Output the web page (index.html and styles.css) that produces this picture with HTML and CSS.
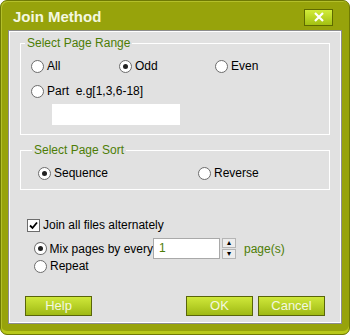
FILE: index.html
```html
<html>
	<head>
		<link rel="stylesheet" href="styles.css">
	</head>
	<body>
	<div class="window">
		<div class="titleBar">
			<span class="title">Join Method</span>
			<span class="closeBtn">
				<svg width="12" height="10" viewBox="0 0 12 10"><path d="M2 1 L10 9 M10 1 L2 9" stroke="#fff" stroke-width="2.2"/></svg>
			</span>
		</div>
		<div class="panel">
			<fieldset class="group rangeGroup">
				<legend>Select Page Range</legend>
				<div class="row">
					<label class="opt optAll"><span class="radio"></span>All</label>
					<label class="opt optOdd"><span class="radio on"></span>Odd</label>
					<label class="opt"><span class="radio"></span>Even</label>
				</div>
				<div class="row partRow">
					<label class="opt"><span class="radio"></span>Part&nbsp; e.g[1,3,6-18]</label>
				</div>
				<div class="partInput"></div>
			</fieldset>

			<fieldset class="group sortGroup">
				<legend>Select Page Sort</legend>
				<div class="row">
					<label class="opt optSeq"><span class="radio on"></span>Sequence</label>
					<label class="opt"><span class="radio"></span>Reverse</label>
				</div>
			</fieldset>

			<div class="joinBlock">
				<label class="opt"><span class="check">
					<svg width="9" height="9" viewBox="0 0 9 9"><path d="M1 4.5 L3.5 7 L8 1.5" stroke="#000" stroke-width="1.8" fill="none"/></svg>
				</span>Join all files alternately</label>
				<div class="mixRow">
					<label class="opt optMix"><span class="radio on"></span>Mix pages by every</label>
					<div class="numInput">1</div>
					<div class="spin">
						<span class="spinBtn">&#9652;</span>
						<span class="spinBtn">&#9662;</span>
					</div>
					<span class="pageLabel">page(s)</span>
				</div>
				<label class="opt repeatOpt"><span class="radio"></span>Repeat</label>
			</div>

			<div class="buttons">
				<span class="btn">Help</span>
				<span class="spacer"></span>
				<span class="btn">OK</span>
				<span class="btn">Cancel</span>
			</div>
		</div>
	</div>
	</body>
</html>
```

FILE: styles.css
```css
body {
	margin: 0;
	font-family: "Liberation Sans", Arial, sans-serif;
	font-size: 12px;
	background: #ffffff;
}

.window {
	width: 350px;
	height: 335px;
	box-sizing: border-box;
	background: #97a30b;
	border: 1px solid #6f7a04;
	border-radius: 7px;
	box-shadow: inset 0 -3px 0 #b8c81a, inset 1px 1px 0 #b3bf2a;
}

.titleBar {
	height: 29px;
	display: flex;
	align-items: center;
	padding: 0 16px 0 12px;
}

.title {
	color: #f4f8e0;
	font-weight: bold;
	font-size: 15px;
	flex: 1;
	padding-top: 1px;
}

.closeBtn {
	width: 27px;
	height: 15px;
	border: 1px solid #5e6a00;
	background: linear-gradient(#d2ec3a, #a3c012);
	display: flex;
	align-items: center;
	justify-content: center;
	margin-top: 3px;
}

.panel {
	margin: 0 7px;
	height: 294px;
	box-sizing: border-box;
	background: #e1e1e1;
	border: 1px solid #8d8d8d;
	box-shadow: inset 1px 1px 0 #ffffff, inset -1px -1px 0 #ffffff;
	padding: 5px 11px 0 11px;
	color: #000;
}

.group {
	margin: 0;
	border: 1px solid #ffffff;
	padding: 0 0 0 10px;
}

.group legend {
	color: #4d7d06;
	padding: 0 2px;
	margin-left: -6px;
	font-size: 12px;
}

.rangeGroup {
	height: 99px;
	box-sizing: border-box;
	padding-top: 7px;
}

.sortGroup {
	margin-top: 8px;
	height: 47px;
	box-sizing: border-box;
	padding-top: 7px;
	padding-left: 17px;
}

.row {
	display: flex;
	height: 18px;
	align-items: center;
}

.partRow {
	margin-top: 7px;
}

.opt {
	display: flex;
	align-items: center;
	height: 18px;
	white-space: nowrap;
}

.optAll {
	width: 88px;
}

.optOdd {
	width: 96px;
}

.optSeq {
	width: 160px;
}

.radio {
	width: 11px;
	height: 11px;
	border: 1px solid #6c6c6c;
	border-radius: 50%;
	background: #ffffff;
	margin-right: 3px;
	display: inline-flex;
	align-items: center;
	justify-content: center;
}

.radio.on::after {
	content: "";
	width: 5px;
	height: 5px;
	border-radius: 50%;
	background: #222;
}

.check {
	width: 11px;
	height: 11px;
	border: 1px solid #6c6c6c;
	background: #ffffff;
	margin-right: 3px;
	display: inline-flex;
	align-items: center;
	justify-content: center;
}

.partInput {
	width: 128px;
	height: 21px;
	background: #ffffff;
	margin: 4px 0 0 21px;
}

.joinBlock {
	margin-top: 26px;
	padding-left: 7px;
}

.repeatOpt {
	padding-left: 7px;
	margin-top: -2px;
}

.mixRow {
	display: flex;
	align-items: center;
	padding-left: 7px;
	margin-top: 4px;
	height: 21px;
}

.optMix {
	width: 119px;
}

.numInput {
	width: 60px;
	height: 19px;
	background: #ffffff;
	border: 1px solid #a9a9a9;
	color: #4d7d06;
	padding-left: 5px;
	line-height: 19px;
}

.spin {
	display: flex;
	flex-direction: column;
	margin-left: 2px;
	gap: 1px;
}

.spinBtn {
	width: 12px;
	height: 8px;
	border: 1px solid #b5b5b5;
	background: #ececec;
	font-size: 8px;
	line-height: 8px;
	text-align: center;
	color: #000;
}

.pageLabel {
	color: #4d7d06;
	margin-left: 8px;
}

.buttons {
	display: flex;
	gap: 5px;
	margin-top: 21px;
	padding: 0 5px;
}

.spacer {
	flex: 1;
}

.btn {
	width: 65px;
	height: 18px;
	border: 1px solid #59650a;
	background: linear-gradient(#cfe83a, #9fb914);
	color: #f4f8e0;
	text-align: center;
	line-height: 18px;
	font-size: 13px;
}
```
